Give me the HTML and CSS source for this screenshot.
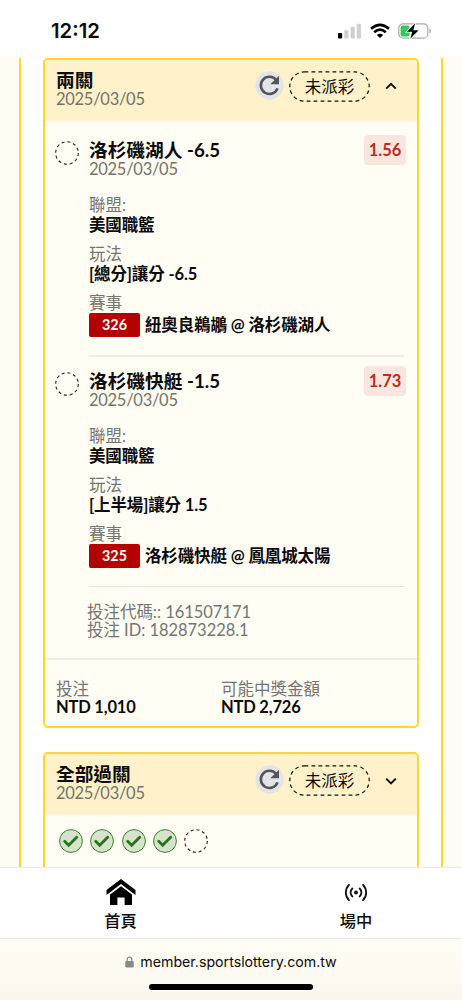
FILE: index.html
```html
<!DOCTYPE html>
<html lang="zh-Hant">
<head>
<meta charset="utf-8">
<meta name="viewport" content="width=device-width">
<title>投注</title>
<link rel="stylesheet" href="styles.css">
</head>
<body>
<svg class="defs" width="0" height="0">
  <symbol id="refresh" viewBox="0 0 29 29"><circle cx="14.5" cy="14.5" r="14.2" fill="#e3e4e7"/><path d="M21.3 9.2A8.6 8.6 0 1 0 22.5 17.4" fill="none" stroke="#555" stroke-width="2.6"/><path d="M24 4.7V13.2H15.3Z" fill="#555"/></symbol>
  <symbol id="pill" viewBox="0 0 81 31"><rect x=".8" y=".8" width="79.4" height="29.4" rx="14.7" fill="none" stroke="#111" stroke-width="1.2" stroke-dasharray="3.8 3.2"/></symbol>
  <symbol id="pending" viewBox="0 0 24 24"><circle cx="12" cy="12" r="11.3" fill="none" stroke="#222" stroke-width="1.1" stroke-dasharray="3.1 2.82"/></symbol>
  <symbol id="won" viewBox="0 0 24 24"><circle cx="12" cy="12" r="11.4" fill="#d6e3cc" stroke="#3b8130" stroke-width="1"/><path d="M5.7 12.2l4 4.1 8-8.1" fill="none" stroke="#2a741e" stroke-width="2.8" stroke-linecap="round"/></symbol>
</svg>
<div class="phone">
  <header class="status">
    <span class="clock">12:12</span>
    <div class="status-icons">
      <svg width="24" height="16" viewBox="0 0 24 16"><rect x="0" y="10" width="4.2" height="5.5" rx="1" fill="#000"/><g fill="#cfcfcf"><rect x="6.3" y="7.3" width="4.2" height="8.2" rx="1"/><rect x="12.6" y="3.8" width="4.2" height="11.7" rx="1"/><rect x="18.8" y=".7" width="4.2" height="14.8" rx="1"/></g></svg>
      <svg class="wifi" width="20" height="16" viewBox="0 0 20 16" fill="none" stroke="#000" stroke-width="2.6"><path d="M1 5.8Q10-2 19 5.8M4.2 9.2Q10 4.2 15.8 9.2"/><path d="M6.8 12Q10 9.4 13.2 12L10 15.1Z" fill="#000" stroke="none"/></svg>
      <svg class="battery" width="34" height="16" viewBox="0 0 34 16"><rect x=".8" y=".8" width="29" height="14.4" rx="4.3" fill="#fff" stroke="#aaa" stroke-width="1.2"/><path d="M31.4 5.2Q33 6.2 33 8T31.4 10.8Z" fill="#aaa"/><rect x="2.6" y="2.6" width="9" height="10.8" rx="2.2" fill="#34c759"/><path d="M17.1.3L9 8.7h5.2L12.3 15.7 20.6 7.2h-5.2Z" fill="#000" stroke="#fff" stroke-width="1.8" paint-order="stroke"/></svg>
    </div>
  </header>
  <main class="page">
    <div class="panel">
      <section class="card">
        <div class="card-head">
          <div><h2 class="title">兩關</h2><div class="date">2025/03/05</div></div>
          <div class="actions">
            <svg class="refresh" width="29" height="29"><use href="#refresh"/></svg>
            <span class="pill"><svg class="pill-line" width="81" height="31"><use href="#pill"/></svg>未派彩</span>
            <svg class="chevron" width="12" height="8" viewBox="0 0 12 8"><path d="M1.2 6.6L6 1.8l4.8 4.8" fill="none" stroke="#111" stroke-width="2"/></svg>
          </div>
        </div>
        <article class="leg">
          <svg class="mark" width="24" height="24"><use href="#pending"/></svg>
          <div class="leg-body">
            <div class="leg-top"><div><h3 class="title">洛杉磯湖人 -6.5</h3><div class="date">2025/03/05</div></div><span class="odds">1.56</span></div>
            <dl class="facts">
              <dt>聯盟:</dt><dd>美國職籃</dd>
              <dt>玩法</dt><dd>[總分]讓分 -6.5</dd>
              <dt>賽事</dt><dd class="match"><span class="code">326</span>紐奧良鵜鶘 @ 洛杉磯湖人</dd>
            </dl>
            <div class="rule"></div>
          </div>
        </article>
        <article class="leg">
          <svg class="mark" width="24" height="24"><use href="#pending"/></svg>
          <div class="leg-body">
            <div class="leg-top"><div><h3 class="title">洛杉磯快艇 -1.5</h3><div class="date">2025/03/05</div></div><span class="odds">1.73</span></div>
            <dl class="facts">
              <dt>聯盟:</dt><dd>美國職籃</dd>
              <dt>玩法</dt><dd>[上半場]讓分 1.5</dd>
              <dt>賽事</dt><dd class="match"><span class="code">325</span>洛杉磯快艇 @ 鳳凰城太陽</dd>
            </dl>
            <div class="rule rule-thin"></div>
          </div>
        </article>
        <div class="ids"><div>投注代碼:: 161507171</div><div>投注 ID: 182873228.1</div></div>
        <dl class="totals">
          <div><dt>投注</dt><dd>NTD 1,010</dd></div>
          <div><dt>可能中獎金額</dt><dd>NTD 2,726</dd></div>
        </dl>
      </section>
      <section class="card">
        <div class="card-head">
          <div><h2 class="title">全部過關</h2><div class="date">2025/03/05</div></div>
          <div class="actions">
            <svg class="refresh" width="29" height="29"><use href="#refresh"/></svg>
            <span class="pill"><svg class="pill-line" width="81" height="31"><use href="#pill"/></svg>未派彩</span>
            <svg class="chevron chevron-down" width="12" height="8" viewBox="0 0 12 8"><path d="M1.2 1.6L6 6.4l4.8-4.8" fill="none" stroke="#111" stroke-width="2"/></svg>
          </div>
        </div>
        <div class="results">
          <svg width="24" height="24"><use href="#won"/></svg>
          <svg width="24" height="24"><use href="#won"/></svg>
          <svg width="24" height="24"><use href="#won"/></svg>
          <svg width="24" height="24"><use href="#won"/></svg>
          <svg width="24" height="24"><use href="#pending"/></svg>
        </div>
      </section>
    </div>
  </main>
  <nav class="tabs">
    <div class="tab tab-home">
      <svg width="30" height="27" viewBox="0 0 30 27"><path d="M.5 11L15 0l14.5 11v5L15 5 .5 16Z"/><path d="M4 15.4L15 7.3l11 8.1V26h-7.4v-7.4h-7.2V26H4Z"/></svg>
      <span>首頁</span>
    </div>
    <div class="tab tab-live">
      <svg width="24" height="27" viewBox="0 0 24 27" fill="none" stroke="#111" stroke-width="1.8" stroke-linecap="round"><circle cx="12" cy="13.5" r="1.9" fill="#111" stroke="none"/><path d="M8.4 9.5a5.3 5.3 0 0 0 0 8M15.6 9.5a5.3 5.3 0 0 1 0 8M5 5.8a11 11 0 0 0 0 15.4M19 5.8a11 11 0 0 1 0 15.4"/></svg>
      <span>場中</span>
    </div>
  </nav>
  <footer class="browser">
    <div class="address"><svg width="9" height="12" viewBox="0 0 9 12"><path d="M2.2 6V3.4a2.3 2.3 0 0 1 4.6 0V6" fill="none" stroke="#888" stroke-width="1.2"/><rect x=".3" y="5" width="8.4" height="6.5" rx="1.2" fill="#888"/></svg><span>member.sportslottery.com.tw</span></div>
    <div class="home-bar"></div>
  </footer>
</div>
</body>
</html>
```
FILE: styles.css
```css
* { box-sizing: border-box; }
body, h2, h3, dl, dd { margin: 0; }
body { font-family: Lato, "Noto Sans CJK TC", sans-serif; font-size: 16.5px; color: #0b0b0b; background: #fff; }
svg { display: block; flex: none; }
.defs { position: absolute; }
.phone { width: 462px; height: 1000px; display: flex; flex-direction: column; overflow: hidden; }

.status { height: 56px; flex: none; display: flex; justify-content: space-between; padding: 18px 30px 0 51px; background: #fff; }
.clock { font: 600 20.3px/26px Inter, sans-serif; }
.status-icons { display: flex; padding-top: 5px; }
.wifi { margin-left: 8px; }
.battery { margin-left: 8px; }

.page { flex: 1; min-height: 0; overflow: hidden; background: #fffcf4; padding: 2px 19px 0; }
.panel { height: 830px; background: #fff; border: solid #ffd72f; border-width: 0 2px; padding: 0 22px; }
.card { border: 2px solid #ffd72f; border-radius: 5px; background: #fffdf4; margin-bottom: 24px; overflow: hidden; }
.card-head { height: 61px; background: #fff1c9; display: flex; justify-content: space-between; padding: 10px 20px 0 11px; }
.title { font-size: 18.7px; line-height: 20px; height: 20px; font-weight: 700; white-space: nowrap; }
.date { font-size: 16.5px; letter-spacing: -.28px; line-height: 19px; height: 20px; color: #757368; }
.actions { display: flex; align-items: flex-start; }
.refresh { margin-top: 1px; }
.pill { position: relative; width: 81px; height: 31px; margin: 1px 0 0 5px; font-size: 16.5px; line-height: 32px; text-align: center; }
.pill-line { position: absolute; left: 0; top: 0; }
.chevron { margin: 12px 0 0 15px; }
.chevron-down { margin-top: 13px; }

.leg { height: 231px; display: flex; padding: 19px 11px 0 10px; }
.mark { margin: 1px 10px 0 0; }
.leg-body { flex: 1; }
.leg-top { display: flex; justify-content: space-between; }
.odds { width: 42px; height: 30px; margin-top: -5px; border-radius: 4px; background: #f8e6df; color: #bd2c24; font-weight: 700; font-size: 16.5px; line-height: 31px; text-align: center; }
.facts { padding-top: 15px; }
dt, dd { height: 20px; line-height: 20px; white-space: nowrap; }
dt { color: #757571; }
dd { font-weight: 700; letter-spacing: -.13px; }
.facts dd { margin-bottom: 9px; }
.facts .match { height: 24px; line-height: 25px; margin: 0; display: flex; }
.code { width: 51px; height: 24px; margin-right: 5px; border-radius: 2px; background: #b40000; color: #fff; font-size: 14.3px; letter-spacing: 0; line-height: 24px; text-align: center; }
.rule { width: 315px; height: 2px; margin-top: 18px; background: #efece5; }
.rule-thin { height: 1px; background: #e9e6df; }
.ids { height: 75px; padding: 20px 0 0 42px; color: #757571; line-height: 19px; letter-spacing: -.04px; }
.ids div { height: 18px; }
.totals { height: 68px; border-top: 2px solid #f0ede6; display: grid; grid-template-columns: 165px 1fr; padding: 19px 11px 0; }
.totals dt { line-height: 21px; }
.totals dd { line-height: 16px; letter-spacing: -.2px; }
.results { height: 76px; display: flex; gap: 7.2px; padding: 14px 0 0 14.2px; }

.tabs { height: 71px; flex: none; background: #fff; border-top: 1px solid #e9e9e9; display: flex; }
.tab { flex: none; display: flex; flex-direction: column; align-items: center; padding-top: 11px; font-size: 16.3px; font-weight: 500; line-height: 26px; }
.tab-home { width: 241px; }
.tab-live { width: 230px; }
.tab span { margin-top: 2px; }
.browser { height: 62px; flex: none; border-top: 1px solid #e8e8e6; background: linear-gradient(#fffdf4, #faf7ee); }
.address { display: flex; justify-content: center; align-items: center; gap: 6px; height: 24px; margin-top: 11px; font: 14.2px/24px Inter, sans-serif; }
.home-bar { width: 164px; height: 6px; border-radius: 3px; background: #000; margin: 10px auto 0; }
```
